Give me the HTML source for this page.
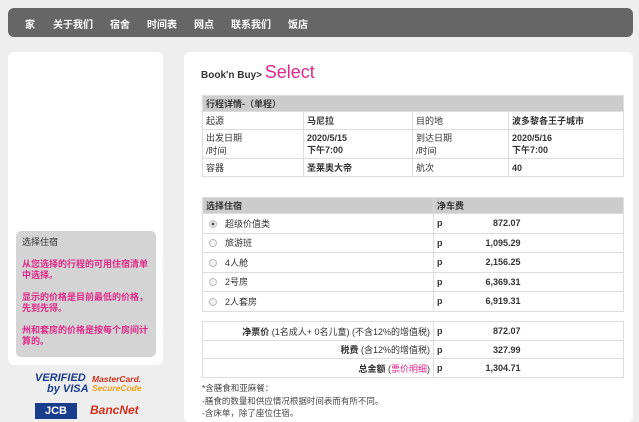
<!DOCTYPE html>
<html><head><meta charset="utf-8"><style>
*{margin:0;padding:0;box-sizing:border-box}
body{width:639px;height:417px;overflow:hidden;background:#eeeeee;font-family:"Liberation Sans","Noto Sans CJK SC",sans-serif;font-size:9px;color:#333;position:relative}
.nav{position:absolute;left:8px;top:8px;width:625px;height:29px;background:#666;border-radius:6px}
.nav span{position:absolute;top:8px;color:#fff;font-weight:bold;font-size:10px}
.lp{position:absolute;left:8px;top:52px;width:155px;height:313px;background:#fff;border-radius:6px}
.gb{position:absolute;left:16px;top:231px;width:140px;height:126px;background:#d4d4d4;border-radius:5px;padding:6px 5px 6px 6px;font-size:9px;line-height:11px}
.gb p{margin-bottom:11px}
.pk{color:#e0288a;font-weight:bold}
.rp{position:absolute;left:184px;top:52px;width:449px;height:370px;background:#fff;border-radius:6px}
.t{position:absolute;left:201px;top:62px;font-weight:bold;font-size:10px;color:#333}
.t b{color:#e0288a;font-weight:normal;font-size:18px}
table{position:absolute;border-collapse:collapse;font-size:9px}
td{border:1px solid #ddd;padding:1px 3px;vertical-align:middle}
.h td{background:#cccccc;font-weight:bold}
.bold{font-weight:bold}
.r{text-align:right}
.rad{display:inline-block;width:8px;height:8px;border-radius:50%;border:1px solid #bbb;background:#f3f3f3;margin:0 8px 0 3px;vertical-align:-1px}
.num{display:inline-block;width:78px;text-align:right;font-weight:bold}
.notes{position:absolute;left:202px;top:382px;font-size:8.5px;line-height:12.5px;color:#444}
</style></head><body>
<div class="nav">
<span style="left:17px">家</span><span style="left:45px">关于我们</span><span style="left:102px">宿舍</span><span style="left:139px">时间表</span><span style="left:186px">网点</span><span style="left:223px">联系我们</span><span style="left:280px">饭店</span>
</div>
<div class="lp"></div>
<div class="gb"><p>选择住宿</p><p class="pk">从您选择的行程的可用住宿清单中选择。</p><p class="pk">显示的价格是目前最低的价格，先到先得。</p><p class="pk">州和套房的价格是按每个房间计算的。</p></div>
<div style="position:absolute;left:35px;top:373px;font:italic bold 11px 'Liberation Sans',sans-serif;color:#1a3c8c;line-height:11px">VERIFIED<br><span style="margin-left:12px">by VISA</span></div>
<div style="position:absolute;left:92px;top:375px;font:italic bold 8.5px 'Liberation Sans',sans-serif;color:#d2311b;line-height:9px">MasterCard.<br><span style="color:#f2a01c">SecureCode</span></div>
<div style="position:absolute;left:35px;top:403px;width:42px;height:16px;background:#1a3c8c;color:#fff;font:bold 11px 'Liberation Sans',sans-serif;text-align:center;line-height:16px">JCB</div>
<div style="position:absolute;left:90px;top:403px;font:italic bold 12px 'Liberation Sans',sans-serif;color:#d2311b">BancNet</div>
<div class="rp"></div>
<div class="t">Book'n Buy&gt; <b>Select</b></div>
<table style="left:202px;top:95px;width:422px">
<tr class="h" style="height:16px"><td colspan="4">行程详情-（单程）</td></tr>
<tr style="height:18px"><td style="width:101px">起源</td><td class="bold" style="width:109px">马尼拉</td><td style="width:96px">目的地</td><td class="bold">波多黎各王子城市</td></tr>
<tr style="height:26px"><td>出发日期<br>/时间</td><td class="bold">2020/5/15<br>下午7:00</td><td>到达日期<br>/时间</td><td class="bold">2020/5/16<br>下午7:00</td></tr>
<tr style="height:18px"><td>容器</td><td class="bold">圣莱奥大帝</td><td>航次</td><td class="bold">40</td></tr>
</table>
<table style="left:202px;top:197px;width:422px">
<tr class="h" style="height:16px"><td style="width:231px">选择住宿</td><td>净车费</td></tr>
<tr style="height:19.5px"><td><span class="rad" style="background:radial-gradient(#555 30%,#f3f3f3 40%)"></span>超级价值类</td><td class="bold">p<span class="num">872.07</span></td></tr>
<tr style="height:19.5px"><td><span class="rad"></span>旅游班</td><td class="bold">p<span class="num">1,095.29</span></td></tr>
<tr style="height:19.5px"><td><span class="rad"></span>4人舱</td><td class="bold">p<span class="num">2,156.25</span></td></tr>
<tr style="height:19.5px"><td><span class="rad"></span>2号房</td><td class="bold">p<span class="num">6,369.31</span></td></tr>
<tr style="height:19.5px"><td><span class="rad"></span>2人套房</td><td class="bold">p<span class="num">6,919.31</span></td></tr>
</table>
<table style="left:202px;top:321px;width:422px">
<tr style="height:19px"><td class="r" style="width:231px"><b>净票价</b> (1名成人+ 0名儿童) (不含12%的增值税)</td><td class="bold">p<span class="num">872.07</span></td></tr>
<tr style="height:18px"><td class="r"><b>税费</b> (含12%的增值税)</td><td class="bold">p<span class="num">327.99</span></td></tr>
<tr style="height:19px"><td class="r"><b>总金额</b> (<span style="color:#e0288a">票价明细</span>)</td><td class="bold">p<span class="num">1,304.71</span></td></tr>
</table>
<div class="notes">*含膳食和亚麻餐：<br>-膳食的数量和供应情况根据时间表而有所不同。<br>-含床单，除了座位住宿。</div>
</body></html>
